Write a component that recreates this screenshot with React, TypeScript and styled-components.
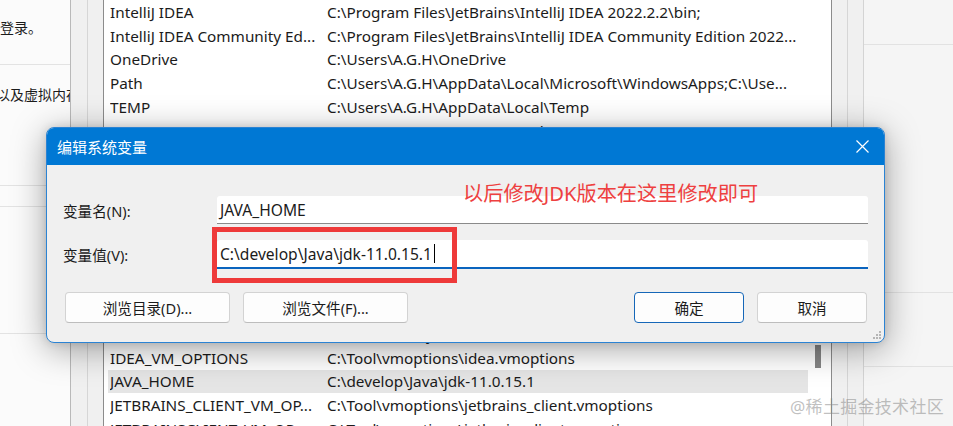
import React from "react";
import styled, { createGlobalStyle } from "styled-components";

const Global = createGlobalStyle`
  html, body { margin: 0; padding: 0; background: #ffffff; }
  body { font-family: "Noto Sans", "Noto Sans CJK SC", sans-serif; }
  #root { width: 953px; height: 426px; }
`;

const FONT = `"Noto Sans", "Noto Sans CJK SC", sans-serif`;

const Stage = styled.div`
  position: relative;
  width: 953px;
  height: 426px;
  overflow: hidden;
  display: flex;
  background: #f4f4f4;
  font-family: ${FONT};
  color: #1b1b1b;
`;

/* ---------- settings page on the left ---------- */
const SettingsLeft = styled.div`
  width: 70px;
  flex: none;
  overflow: hidden;
  background: #fbfbfb;
  display: flex;
  flex-direction: column;
`;

const SettingsBlock = styled.div<{ $h: number; $pad: number; $top?: boolean }>`
  height: ${(p) => p.$h}px;
  flex: none;
  box-sizing: border-box;
  padding-top: ${(p) => p.$pad}px;
  border-bottom: 1px solid #e3e3e3;
  border-top: ${(p) => (p.$top ? "1px solid #e3e3e3" : "none")};
`;

const SettingsGap = styled.div<{ $h: number }>`
  height: ${(p) => p.$h}px;
  flex: none;
`;

const ClippedLine = styled.div<{ $shift: number }>`
  margin-left: ${(p) => p.$shift}px;
  font-size: 14px;
  line-height: 20px;
  white-space: nowrap;
  color: #1b1b1b;
`;

/* ---------- environment variables window behind ---------- */
const EnvWindow = styled.div`
  width: 794px;
  flex: none;
  box-sizing: border-box;
  border-left: 1px solid #b9b9b9;
  border-right: 1px solid #d4d4d4;
  background: #f0f0f0;
  display: flex;
`;

const GroupFrame = styled.div`
  flex: 1;
  margin: 0 15px 0 16px;
  padding: 0 15px;
  border-left: 1px solid #d6d6d6;
  border-right: 1px solid #d6d6d6;
  display: flex;
  flex-direction: column;
`;

const ListBox = styled.div<{ $h?: number }>`
  ${(p) => (p.$h ? `height: ${p.$h}px; flex: none;` : "flex: 1;")}
  box-sizing: border-box;
  border-left: 1px solid #8c8c8c;
  border-right: 1px solid #8c8c8c;
  background: #ffffff;
  display: flex;
  overflow: hidden;
`;

const ListMiddle = styled.div`
  height: 172px;
  flex: none;
`;

const Rows = styled.div`
  flex: 1;
  padding-left: 4px;
  display: flex;
  flex-direction: column;
  overflow: hidden;
`;

const Row = styled.div<{ $selected?: boolean }>`
  height: 23.8px;
  flex: none;
  display: grid;
  grid-template-columns: 217px 1fr;
  align-items: center;
  padding-left: 2px;
  background: ${(p) => (p.$selected ? "#e5e5e5" : "transparent")};
  font-size: 15.3px;
  white-space: nowrap;
  color: #1b1b1b;
`;

const Cell = styled.span`
  overflow: hidden;
`;

const ScrollTrack = styled.div`
  width: 23px;
  flex: none;
  padding: 23px 0 0 7px;
  box-sizing: border-box;
`;

const ScrollThumb = styled.div`
  width: 6px;
  height: 23px;
  background: #858585;
`;

/* ---------- settings page on the right ---------- */
const SettingsRight = styled.div`
  flex: 1;
  background: #f5f5f5;
  display: flex;
  flex-direction: column;
`;

const RightBand = styled.div<{ $h: number }>`
  height: ${(p) => p.$h}px;
  flex: none;
  border-bottom: 1px solid #e2e2e2;
`;

/* ---------- the edit dialog ---------- */
const Dialog = styled.div`
  position: absolute;
  left: 46px;
  top: 127px;
  width: 839px;
  height: 216px;
  box-sizing: border-box;
  border: 1px solid #2b83d3;
  border-radius: 8px;
  overflow: hidden;
  background: #f0f0f0;
  box-shadow: 0 6px 34px rgba(0, 0, 0, 0.36), 0 0 8px rgba(0, 0, 0, 0.12);
  display: flex;
  flex-direction: column;
`;

const TitleBar = styled.div`
  height: 37px;
  flex: none;
  background: #0078d4;
  color: #ffffff;
  display: flex;
  align-items: center;
  justify-content: space-between;
  padding-left: 10px;
  font-size: 15px;
`;

const CloseButton = styled.div`
  width: 44px;
  height: 37px;
  display: flex;
  align-items: center;
  justify-content: center;
`;

const Body = styled.div`
  flex: 1;
  padding: 31px 16px 0 16px;
  display: flex;
  flex-direction: column;
`;

const FieldRow = styled.div<{ $mt: number }>`
  display: flex;
  align-items: center;
  margin-top: ${(p) => p.$mt}px;
`;

const Label = styled.div`
  width: 154px;
  flex: none;
  font-size: 14.6px;
  color: #1b1b1b;
`;

const Input = styled.div<{ $focused?: boolean }>`
  flex: 1;
  box-sizing: border-box;
  height: ${(p) => (p.$focused ? 29 : 28)}px;
  background: #ffffff;
  border-radius: 3px 3px 0 0;
  border-bottom: ${(p) => (p.$focused ? "2px solid #0a64be" : "1px solid #8a8a8a")};
  display: flex;
  align-items: center;
  padding-left: 3px;
  font-size: 15.6px;
  color: #1b1b1b;
  white-space: nowrap;
`;

const Caret = styled.span`
  display: inline-block;
  width: 1px;
  height: 19px;
  background: #000;
  margin-left: 2px;
`;

const ButtonRow = styled.div`
  display: flex;
  margin-top: 23px;
  padding: 0 1px 0 2px;
  gap: 13px;
`;

const Spacer = styled.div`
  flex: 1;
`;

const Button = styled.div<{ $w: number; $primary?: boolean }>`
  width: ${(p) => p.$w}px;
  height: 31px;
  box-sizing: border-box;
  border-radius: 4px;
  background: #fdfdfd;
  border: 1px solid ${(p) => (p.$primary ? "#1667b8" : "#d3d3d3")};
  border-bottom-color: ${(p) => (p.$primary ? "#1667b8" : "#bdbdbd")};
  display: flex;
  align-items: center;
  justify-content: center;
  font-size: 14.6px;
  color: #1b1b1b;
`;

const Annotation = styled.div`
  position: absolute;
  left: 416px;
  top: 53px;
  font-size: 20.2px;
  line-height: 24px;
  color: #ee4040;
  white-space: nowrap;
`;

const Highlight = styled.div`
  position: absolute;
  left: 165px;
  top: 99px;
  width: 245px;
  height: 56px;
  box-sizing: border-box;
  border: 5px solid #ee3a3a;
`;

const Grip = styled.svg`
  position: absolute;
  right: 2px;
  bottom: 2px;
`;

const Watermark = styled.div`
  position: absolute;
  right: 9px;
  bottom: 8px;
  font-size: 17px;
  color: rgba(130, 130, 130, 0.5);
  white-space: nowrap;
  letter-spacing: 0.3px;
`;

const topRows: [string, string][] = [
  ["IntelliJ IDEA", "C:\\Program Files\\JetBrains\\IntelliJ IDEA 2022.2.2\\bin;"],
  ["IntelliJ IDEA Community Ed...", "C:\\Program Files\\JetBrains\\IntelliJ IDEA Community Edition 2022..."],
  ["OneDrive", "C:\\Users\\A.G.H\\OneDrive"],
  ["Path", "C:\\Users\\A.G.H\\AppData\\Local\\Microsoft\\WindowsApps;C:\\Use..."],
  ["TEMP", "C:\\Users\\A.G.H\\AppData\\Local\\Temp"],
  ["TMP", "C:\\Users\\A.G.H\\AppData\\Local\\Temp"],
];

const bottomRows: [string, string][] = [
  ["DriverData", "C:\\Windows\\System32\\Drivers\\DriverData"],
  ["IDEA_VM_OPTIONS", "C:\\Tool\\vmoptions\\idea.vmoptions"],
  ["JAVA_HOME", "C:\\develop\\Java\\jdk-11.0.15.1"],
  ["JETBRAINS_CLIENT_VM_OP...", "C:\\Tool\\vmoptions\\jetbrains_client.vmoptions"],
  ["JETBRAINSCLIENT_VM_OP...", "C:\\Tool\\vmoptions\\jetbrainsclient.vmoptions"],
];

export default function App() {
  return (
    <>
      <Global />
      <Stage>
        <SettingsLeft>
          <SettingsBlock $h={65} $pad={18}>
            <ClippedLine $shift={-56}>需要重新登录。</ClippedLine>
          </SettingsBlock>
          <SettingsBlock $h={121} $pad={20}>
            <ClippedLine $shift={-60}>视觉效果以及虚拟内存</ClippedLine>
          </SettingsBlock>
          <SettingsGap $h={20} />
          <SettingsBlock $h={128} $pad={20} $top />
        </SettingsLeft>

        <EnvWindow>
          <GroupFrame>
            <ListBox $h={150}>
              <Rows>
                {topRows.map(([n, v]) => (
                  <Row key={n}>
                    <Cell>{n}</Cell>
                    <Cell>{v}</Cell>
                  </Row>
                ))}
              </Rows>
              <ScrollTrack />
            </ListBox>
            <ListMiddle />
            <ListBox>
              <Rows>
                {bottomRows.map(([n, v]) => (
                  <Row key={n} $selected={n === "JAVA_HOME"}>
                    <Cell>{n}</Cell>
                    <Cell>{v}</Cell>
                  </Row>
                ))}
              </Rows>
              <ScrollTrack>
                <ScrollThumb />
              </ScrollTrack>
            </ListBox>
          </GroupFrame>
        </EnvWindow>

        <SettingsRight>
          <RightBand $h={44} />
          <RightBand $h={247} />
          <RightBand $h={73} />
        </SettingsRight>

        <Dialog>
          <TitleBar>
            <span>编辑系统变量</span>
            <CloseButton>
              <svg width="13" height="13" viewBox="0 0 13 13">
                <path d="M0.5 0.5 L12.5 12.5 M12.5 0.5 L0.5 12.5" stroke="#ffffff" strokeWidth="1.2" fill="none" />
              </svg>
            </CloseButton>
          </TitleBar>
          <Body>
            <FieldRow $mt={0}>
              <Label>变量名(N):</Label>
              <Input>JAVA_HOME</Input>
            </FieldRow>
            <FieldRow $mt={16}>
              <Label>变量值(V):</Label>
              <Input $focused>
                C:\develop\Java\jdk-11.0.15.1
                <Caret />
              </Input>
            </FieldRow>
            <ButtonRow>
              <Button $w={165}>浏览目录(D)...</Button>
              <Button $w={165}>浏览文件(F)...</Button>
              <Spacer />
              <Button $w={110} $primary>
                确定
              </Button>
              <Button $w={110}>取消</Button>
            </ButtonRow>
          </Body>
          <Annotation>以后修改JDK版本在这里修改即可</Annotation>
          <Highlight />
          <Grip width="10" height="10" viewBox="0 0 10 10">
            <rect x="7" y="1" width="2" height="2" fill="#b5b5b5" />
            <rect x="4" y="4" width="2" height="2" fill="#b5b5b5" />
            <rect x="7" y="4" width="2" height="2" fill="#b5b5b5" />
            <rect x="1" y="7" width="2" height="2" fill="#b5b5b5" />
            <rect x="4" y="7" width="2" height="2" fill="#b5b5b5" />
            <rect x="7" y="7" width="2" height="2" fill="#b5b5b5" />
          </Grip>
        </Dialog>

        <Watermark>@稀土掘金技术社区</Watermark>
      </Stage>
    </>
  );
}
